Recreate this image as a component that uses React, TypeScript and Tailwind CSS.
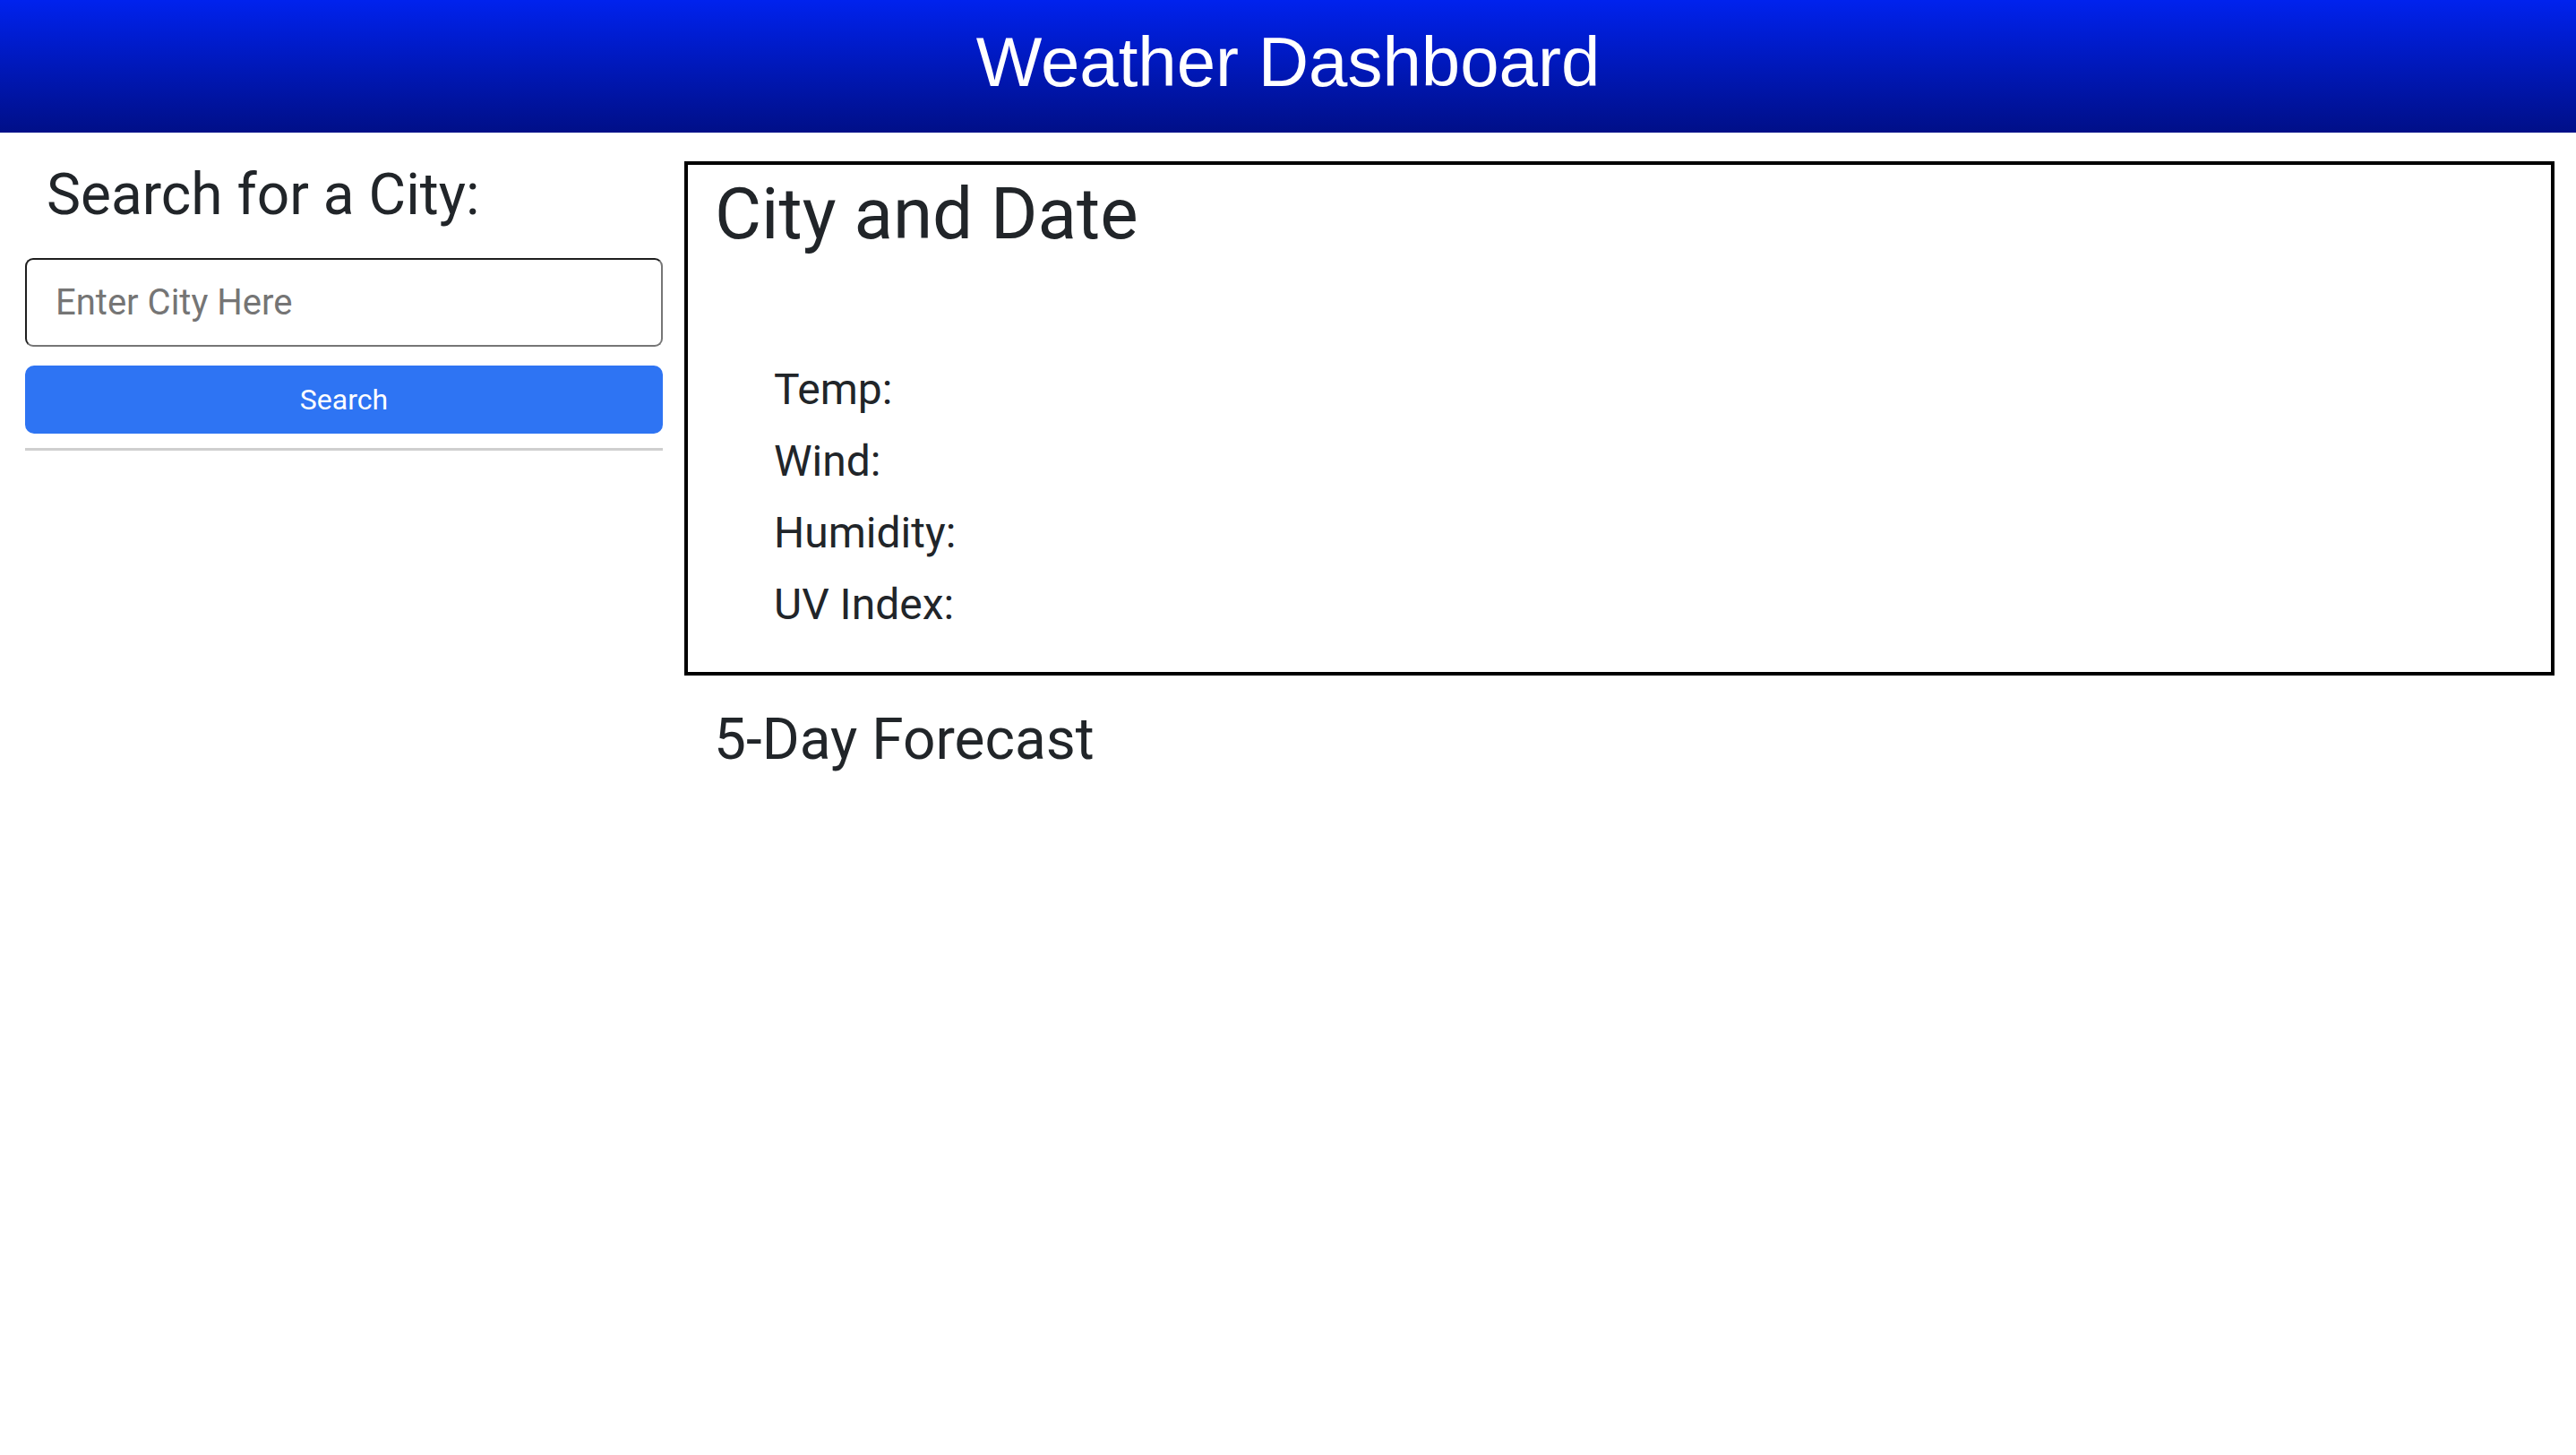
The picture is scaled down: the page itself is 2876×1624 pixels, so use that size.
export default function App() {
  const stats = ['Temp:', 'Wind:', 'Humidity:', 'UV Index:']

  return (
    <div className="min-h-screen bg-white text-[#212529] font-['Roboto',sans-serif]">
      {/* Page header */}
      <header className="h-[148px] bg-gradient-to-b from-[#0022ee] to-[#000f88] text-center pt-[23px]">
        <h1 className="text-white text-[78px] leading-[92px] font-normal font-['Liberation_Sans',Arial,sans-serif]">
          Weather Dashboard
        </h1>
      </header>

      <div className="flex gap-6 pl-[28px] pr-6 pt-8">
        {/* Search column */}
        <aside className="w-[712px] shrink-0">
          <h2 className="text-[64px] leading-[1.2] font-normal pl-[24px]">Search for a City:</h2>
          <input
            type="text"
            placeholder="Enter City Here"
            className="mt-[31px] block w-full h-[99px] px-8 text-[40px] rounded-[9px] border-2 border-solid border-t-[#1e1e1e] border-l-[#1e1e1e] border-r-[#767676] border-b-[#767676] outline-none placeholder:text-[#757575]"
          />
          <button className="mt-[21px] block w-full h-[76px] rounded-[10px] bg-[#2e74f3] text-white text-[32px] leading-none">
            Search
          </button>
          <hr className="mt-4 border-0 h-[3px] bg-[#cfcfcf]" />
        </aside>

        {/* Current weather + forecast */}
        <main className="flex-1">
          <section className="h-[574px] border-4 border-black pt-[7px] pl-[30px]">
            <h1 className="text-[80px] leading-[96px] font-normal">City and Date</h1>
            <ul className="mt-[108px] pl-[66px] text-[48px] leading-[80px]">
              {stats.map((s) => (
                <li key={s}>{s}</li>
              ))}
            </ul>
          </section>
          <h2 className="mt-[34px] pl-[33px] text-[64px] leading-[1.2] font-normal">5-Day Forecast</h2>
        </main>
      </div>
    </div>
  )
}
